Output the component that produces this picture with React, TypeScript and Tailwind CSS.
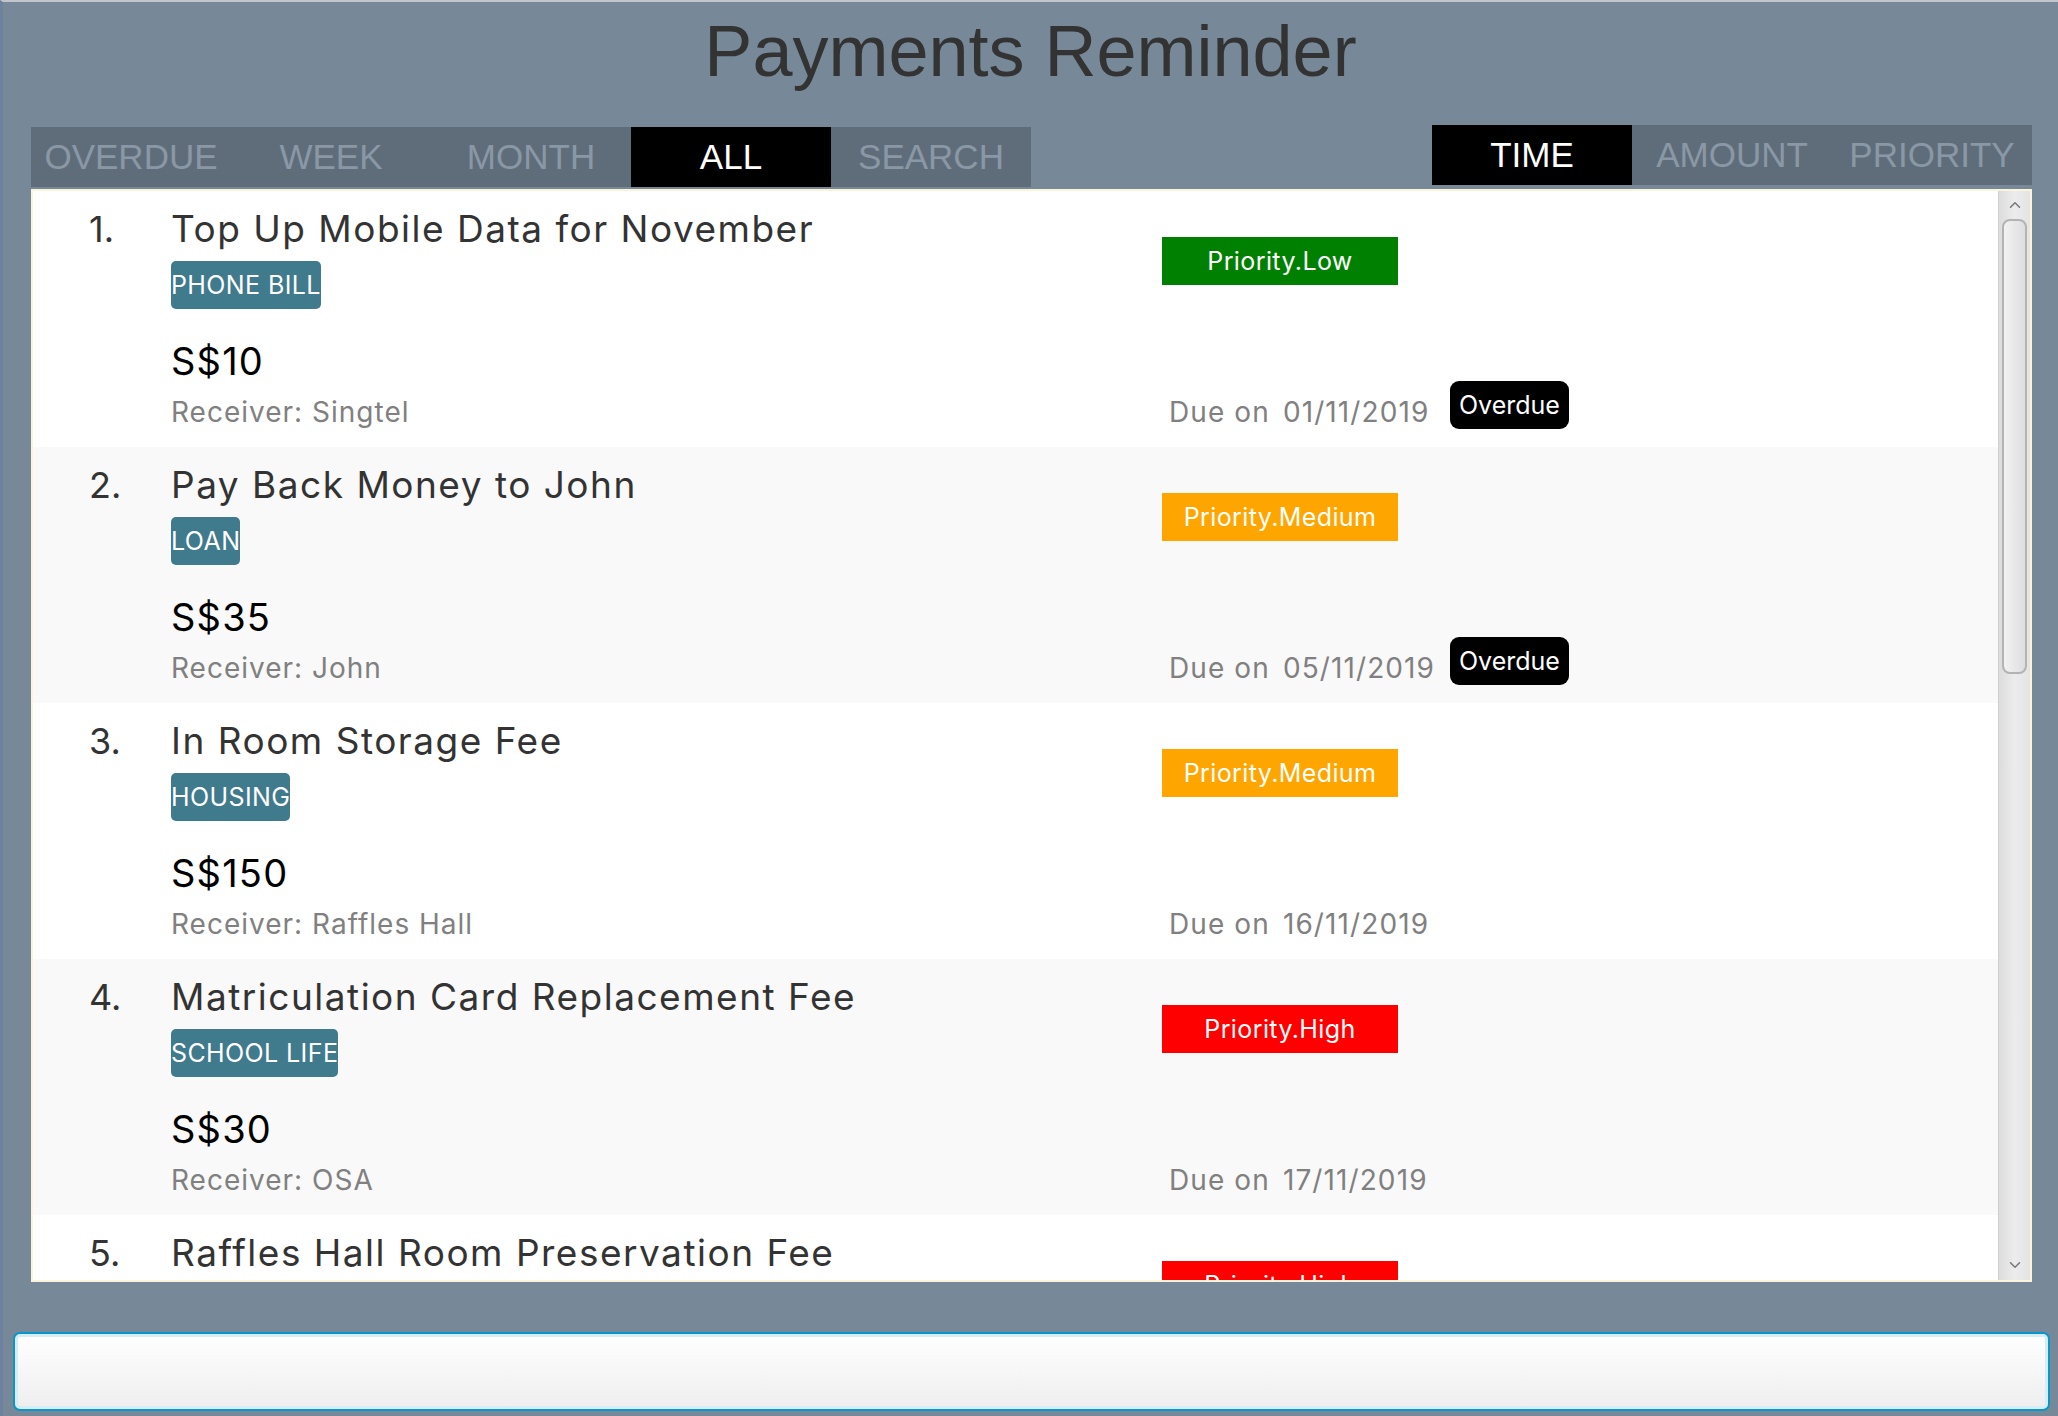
import {ChevronUp, ChevronDown} from 'lucide-react';

const payments = [
  {title: 'Top Up Mobile Data for November', tag: 'PHONE BILL', amount: 10, receiver: 'Singtel', priority: 'Low', date: '01/11/2019', overdue: true},
  {title: 'Pay Back Money to John', tag: 'LOAN', amount: 35, receiver: 'John', priority: 'Medium', date: '05/11/2019', overdue: true},
  {title: 'In Room Storage Fee', tag: 'HOUSING', amount: 150, receiver: 'Raffles Hall', priority: 'Medium', date: '16/11/2019', overdue: false},
  {title: 'Matriculation Card Replacement Fee', tag: 'SCHOOL LIFE', amount: 30, receiver: 'OSA', priority: 'High', date: '17/11/2019', overdue: false},
  {title: 'Raffles Hall Room Preservation Fee', tag: 'HOUSING', amount: 100, receiver: 'Raffles Hall', priority: 'High', date: '20/11/2019', overdue: false},
];

const priorityColors: Record<string, string> = {
  Low: 'bg-[#008000]',
  Medium: 'bg-[#ffa500]',
  High: 'bg-[#ff0000]',
};

function Tab({label, active}: {label: string; active?: boolean}) {
  return (
    <div
      className={`w-[200px] h-full flex items-center justify-center text-[35px] ${
        active ? 'bg-black text-white' : 'text-[#8a98a6]'
      }`}
    >
      {label}
    </div>
  );
}

function PaymentRow({p, index}: {p: (typeof payments)[number]; index: number}) {
  return (
    <div className={`flex h-[256px] shrink-0 ${index % 2 === 0 ? 'bg-white' : 'bg-[#f9f9f9]'}`}>
      <div className="w-[138px] shrink-0 pl-[56px] pt-[20px] text-[36px] leading-none text-[#333333]">
        {index + 1}.
      </div>
      <div className="w-[991px] shrink-0 flex flex-col items-start pt-[19px]">
        <div className="text-[37px] leading-none tracking-[1.5px] text-[#333333] whitespace-nowrap">{p.title}</div>
        <div className="mt-[14px] h-[48px] rounded-[5px] bg-[#3f7a8d] text-[25px] leading-[48px] tracking-[0.4px] text-white">
          {p.tag}
        </div>
        <div className="mt-[33px] text-[38px] leading-none tracking-[1.2px] text-black">S${p.amount}</div>
        <div className="mt-[18px] text-[28px] leading-none tracking-[1px] text-[#808080]">Receiver: {p.receiver}</div>
      </div>
      <div className="flex flex-col items-start">
        <div
          className={`mt-[46px] h-[48px] w-[236px] text-center text-[25px] leading-[48px] tracking-[0.4px] text-white ${priorityColors[p.priority]}`}
        >
          Priority.{p.priority}
        </div>
        <div className="mt-[96px] flex items-start">
          <div className="w-[288px] pl-[7px] pt-[17px] flex gap-[13px] text-[28px] leading-none tracking-[1.1px] text-[#808080]">
            <span>Due on</span>
            <span>{p.date}</span>
          </div>
          {p.overdue && (
            <div className="h-[48px] rounded-[9px] bg-black px-[9px] text-[25px] leading-[48px] text-white">
              Overdue
            </div>
          )}
        </div>
      </div>
    </div>
  );
}

export default function App() {
  return (
    <div className="w-[2058px] h-[1416px] overflow-hidden bg-[#778899] border-t-2 border-t-[#c2c6cc] border-l-[3px] border-l-[#6d81a0] flex flex-col font-['Liberation_Sans',Arial,sans-serif]">
      <h1 className="mt-[13px] h-[72px] text-center text-[72px] leading-none text-[#333333]">
        Payments Reminder
      </h1>

      <div className="mt-[38px] flex justify-between pl-[28px] pr-[26px]">
        <div className="mt-[2px] h-[60px] flex bg-[#5f6d7b]">
          <Tab label="OVERDUE" />
          <Tab label="WEEK" />
          <Tab label="MONTH" />
          <Tab label="ALL" active />
          <Tab label="SEARCH" />
        </div>
        <div className="h-[60px] flex bg-[#5f6d7b]">
          <Tab label="TIME" active />
          <Tab label="AMOUNT" />
          <Tab label="PRIORITY" />
        </div>
      </div>

      <div className="mt-[2px] ml-[28px] mr-[26px] h-[1093px] border-2 border-[#fbf3da] flex font-['Inter',sans-serif]">
        <div className="flex-1 flex flex-col overflow-hidden">
          {payments.map((p, i) => (
            <PaymentRow key={i} p={p} index={i} />
          ))}
        </div>
        <div className="w-[32px] shrink-0 flex flex-col items-center bg-gradient-to-r from-[#dcdcdc] via-[#ececec] to-[#e4e4e4] border-l border-[#d0d0d0]">
          <ChevronUp className="mt-[5px] h-[18px] w-[18px] text-[#777777]" strokeWidth={2} />
          <div className="mt-[5px] w-[25px] h-[455px] rounded-[8px] border-2 border-[#b3b3b3] bg-gradient-to-r from-[#f2f2f2] to-[#dedede]" />
          <div className="flex-1" />
          <ChevronDown className="mb-[6px] h-[18px] w-[18px] text-[#777777]" strokeWidth={2} />
        </div>
      </div>

      <div className="mt-[50px] ml-[10px] mr-[8px] h-[79px] rounded-[7px] border-2 border-[#0997cb] bg-gradient-to-b from-white to-[#eeeeee] shadow-[inset_0_0_0_3px_#d6edf6]" />
    </div>
  );
}
